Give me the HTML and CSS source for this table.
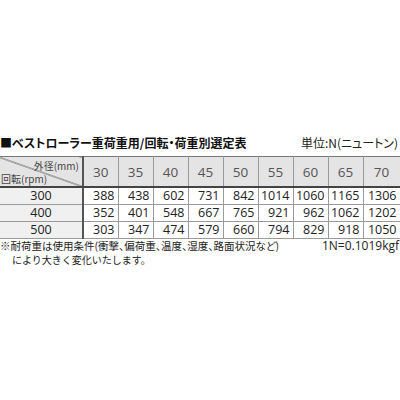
FILE: index.html
```html
<!DOCTYPE html>
<html lang="ja">
<head>
<meta charset="utf-8">
<link rel="stylesheet" href="styles.css">
</head>
<body>
<div class="page">
  <div class="titlebar">
    <div class="title">■ベストローラー重荷重用/回転・荷重別選定表</div>
    <div class="unit">単位:N(ニュートン)</div>
  </div>
  <table class="tbl">
    <colgroup>
      <col class="c-head">
      <col class="c-num"><col class="c-num"><col class="c-num"><col class="c-num"><col class="c-num"><col class="c-num"><col class="c-num"><col class="c-num"><col class="c-last">
    </colgroup>
    <thead>
      <tr>
        <th class="corner"><span class="outer">外径(mm)</span><span class="rpm">回転(rpm)</span></th>
        <th>30</th><th>35</th><th>40</th><th>45</th><th>50</th><th>55</th><th>60</th><th>65</th><th>70</th>
      </tr>
    </thead>
    <tbody>
      <tr><th>300</th><td>388</td><td>438</td><td>602</td><td>731</td><td>842</td><td>1014</td><td>1060</td><td>1165</td><td>1306</td></tr>
      <tr><th>400</th><td>352</td><td>401</td><td>548</td><td>667</td><td>765</td><td>921</td><td>962</td><td>1062</td><td>1202</td></tr>
      <tr><th>500</th><td>303</td><td>347</td><td>474</td><td>579</td><td>660</td><td>794</td><td>829</td><td>918</td><td>1050</td></tr>
    </tbody>
  </table>
  <div class="notes">
    <div class="note-row">
      <span class="note">※耐荷重は使用条件(衝撃、偏荷重、温度、湿度、路面状況など)</span>
      <span class="conv">1N=0.1019kgf</span>
    </div>
    <div class="note2">により大きく変化いたします。</div>
  </div>
</div>
</body>
</html>
```
FILE: styles.css
```css
html, body {
  margin: 0;
  padding: 0;
  background: #fff;
}
body {
  width: 400px;
  height: 400px;
  overflow: hidden;
  font-family: "Noto Sans CJK JP", "Noto Sans", sans-serif;
  color: #222;
}
.page {
  padding-top: 134px;
  width: 400px;
}
.titlebar {
  display: flex;
  justify-content: space-between;
  align-items: baseline;
  height: 22px;
  line-height: 18px;
}
.title {
  font-size: 12px;
  font-weight: bold;
  color: #111;
  font-feature-settings: "palt";
}
.unit {
  font-size: 12px;
  padding-right: 2px;
  color: #222;
  font-feature-settings: "palt";
}
.tbl {
  border-collapse: collapse;
  table-layout: fixed;
  width: 400px;
  font-family: "Open Sans", "Noto Sans CJK JP", sans-serif;
  font-size: 12.5px;
}
.c-head { width: 83px; }
.c-num { width: 35px; }
.c-last { width: 37px; }
.tbl th, .tbl td {
  border: 1px solid #9a9a9a;
  padding: 0;
  font-weight: normal;
  line-height: 16px;
  height: 16px;
}
.tbl thead th {
  background: #e4e4e4;
  height: 29px;
  color: #555;
  font-size: 13.5px;
  border-top: 1px solid #777;
  border-bottom: 2px solid #444;
  text-align: center;
}
.tbl thead th.corner {
  position: relative;
  text-align: left;
  border-left: none;
  background: linear-gradient(to top right, #e4e4e4 calc(50% - 0.8px), #555 50%, #e4e4e4 calc(50% + 0.8px));
}
.outer, .rpm {
  position: absolute;
  font-family: "Noto Sans CJK JP", sans-serif;
  font-size: 10px;
  line-height: 11px;
  color: #444;
  font-feature-settings: "palt";
}
.outer {
  right: 3px;
  top: 3px;
}
.rpm {
  left: 1px;
  bottom: 2px;
}
.tbl tbody th {
  background: #f0f0f0;
  text-align: center;
  border-left: none;
  color: #222;
}
.tbl th:first-child {
  border-right: 2px solid #555;
}
.tbl td {
  text-align: right;
  padding-right: 3px;
  color: #222;
}
.notes {
  line-height: 14px;
  padding-top: 0;
  color: #222;
}
.note-row {
  display: flex;
  justify-content: space-between;
  align-items: baseline;
}
.note {
  font-size: 10.5px;
  font-feature-settings: "palt";
}
.conv {
  font-family: "Open Sans", sans-serif;
  font-size: 12px;
  padding-right: 1px;
}
.note2 {
  font-size: 10px;
  padding-left: 12px;
}
```
